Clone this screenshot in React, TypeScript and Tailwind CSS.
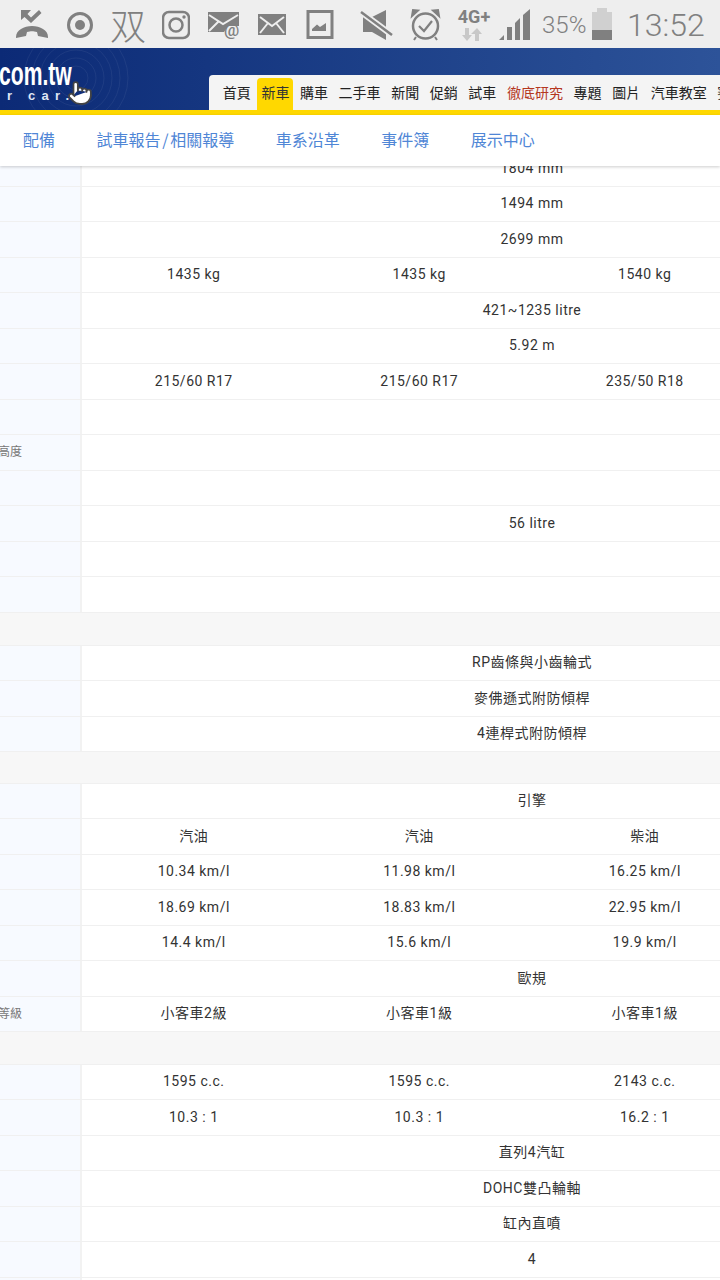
import React from "react";
import { Pointer } from "lucide-react";

const c = "#808080";

function Ico({ x, w, className, children }: { x: number; w: number; className: string; children: React.ReactNode }) {
  return (
    <svg width={w} height={48} viewBox={`${x} 0 ${w} 48`} className={`shrink-0 ${className}`}>
      {children}
    </svg>
  );
}

function StatusBar() {
  return (
    <div className="flex h-12 items-center overflow-hidden bg-[#eeeeee] font-['Roboto',sans-serif] text-[#808080]">
      <Ico x={16} w={32} className="ml-[16px]">
        <path d="M21 10 H31 L27.500 14 L31 17.500 L39 10 L41.500 13 L31 23 L24.500 17 L21 20 Z" fill={c} />
        <path d="M16 37 C16 30 24 26 32 26 C40 26 48 30 48 37 V38 L38 36 L37 32 C33 31 31 31 27 32 L26 36 L16 38 Z" fill={c} />
      </Ico>
      <Ico x={67} w={26} className="ml-[19px]">
        <circle cx="80" cy="25" r="11.500" fill="none" stroke={c} strokeWidth="3" />
        <circle cx="80" cy="25" r="5" fill={c} />
      </Ico>
      <span className="ml-[17px] w-[35px] shrink-0 text-center font-['Noto_Sans_CJK_SC',sans-serif] text-[36px] leading-[48px] font-light">双</span>
      <Ico x={162} w={28} className="ml-[17px]">
        <rect x="163" y="12" width="26" height="26" rx="6" fill="none" stroke={c} strokeWidth="2.500" />
        <circle cx="176" cy="25" r="6.500" fill="none" stroke={c} strokeWidth="2.500" />
        <circle cx="184" cy="17" r="1.700" fill={c} />
      </Ico>
      <div className="relative ml-[18px] h-12 w-[33px] shrink-0">
        <Ico x={208} w={33} className="">
          <path d="M208 12 H239 V26 H228 L224 32 H208 Z" fill={c} />
          <path d="M209 15 L223 24 L238 15 M209 31 L219 21" fill="none" stroke="#eee" strokeWidth="2" />
        </Ico>
        <span className="absolute left-[16px] top-[20px] text-[17px] leading-[20px] font-medium">@</span>
      </div>
      <Ico x={258} w={28} className="ml-[17px]">
        <rect x="258" y="14" width="28" height="21" fill={c} />
        <path d="M260 17 L272 26 L284 17 M260 33 L268 23 M284 33 L276 23" fill="none" stroke="#eee" strokeWidth="2" />
      </Ico>
      <Ico x={306} w={28} className="ml-[20px]">
        <rect x="308" y="11.500" width="24" height="26" fill="none" stroke={c} strokeWidth="3" />
        <path d="M312 31 V29 L317 24.500 L320 27 L326 23 V31 Z" fill={c} />
      </Ico>
      <Ico x={360} w={34} className="ml-[26px]">
        <path d="M363 17 H372 L386 10 V40 L372 32 H363 Z" fill={c} />
        <path d="M361 12 L392 35" stroke="#eee" strokeWidth="6" />
        <path d="M361 12 L392 35" stroke={c} strokeWidth="2.500" />
      </Ico>
      <Ico x={410} w={32} className="ml-[16px]">
        <circle cx="425.500" cy="26" r="12.500" fill="none" stroke={c} strokeWidth="2.500" />
        <path d="M419 26 L424 31 L432 21" fill="none" stroke={c} strokeWidth="2.200" />
        <path d="M412 16 L418 10.500 L413 10 Z M439 16 L433 10.500 L438 10 Z" fill={c} stroke={c} strokeWidth="2" />
        <path d="M416 37 L414 40 M435 37 L437 40" stroke={c} strokeWidth="2" />
      </Ico>
      <div className="ml-[15px] flex h-12 w-[34px] shrink-0 flex-col items-center pt-[6px]">
        <span className="text-[18px] leading-[21px] font-bold">4G+</span>
        <svg width="20" height="14" viewBox="467 28 20 14" className="mr-[5px] mt-[1px]">
          <path d="M470 28 H474 V35 H477 L472 41 L467 35 H470 Z" fill="#c8c8c8" />
          <path d="M480 41 H484 V34 H487 L482 28 L476 34 H480 Z" fill="#c8c8c8" />
        </svg>
      </div>
      <Ico x={500} w={31} className="ml-[8px]">
        <path d="M500 40 L505 35 V40 Z" fill={c} />
        <rect x="508" y="27" width="5" height="13" fill={c} />
        <path d="M516 40 V23 L521 18 V40 Z" fill={c} />
        <path d="M524 40 V15 L531 9 V40 Z" fill={c} />
      </Ico>
      <span className="ml-[12px] w-[45px] shrink-0 pt-[2px] text-[24px] leading-[46px] font-light">35%</span>
      <Ico x={593} w={21} className="ml-[5px]">
        <rect x="593" y="12" width="20" height="28" fill="#d0d0d0" />
        <rect x="598" y="8" width="10" height="4" fill="#d0d0d0" />
        <rect x="593" y="30" width="20" height="10" fill={c} />
      </Ico>
      <span className="ml-[14px] shrink-0 pt-[2px] text-[32px] leading-[46px] font-light">13:52</span>
    </div>
  );
}

function Logo() {
  return (
    <div className="relative h-[62px] w-[209px] shrink-0 overflow-hidden">
      <svg width="209" height="62" viewBox="0 0 209 62" className="absolute left-0 top-0">
        {[12, 20, 28, 36, 44, 52].map((r) => (
          <circle key={r} cx="76" cy="30" r={r} fill="none" stroke="#fff" strokeOpacity="0.06" />
        ))}
      </svg>
      <div className="absolute left-[-1px] top-[14px] origin-left scale-x-[0.64] font-['Liberation_Sans',sans-serif] text-[33px] leading-[24px] font-bold text-white">com.tw</div>
      <div className="absolute left-[7px] top-[41px] font-['Liberation_Sans',sans-serif] text-[13px] leading-[14px] font-bold tracking-[6.2px] text-[#dfe6f5]">r car.</div>
      <Pointer className="absolute left-[67px] top-[32px]" size={26} fill="#fff" stroke="#444" strokeWidth={1.6} />
    </div>
  );
}

function TopBanner() {
  const items = ["首頁", "新車", "購車", "二手車", "新聞", "促銷", "試車", "徹底研究", "專題", "圖片", "汽車教室", "賽車"];
  return (
    <div className="flex h-[62px] items-end bg-gradient-to-r from-[#0c2a76] to-[#2d5399]">
      <Logo />
      <div className="flex h-[35px] w-[511px] shrink-0 items-end overflow-hidden rounded-tl bg-[#f4f4f4] pl-[8.5px] font-['Noto_Sans_CJK_TC',sans-serif]">
        {items.map((t) => (
          <div
            key={t}
            className={`mx-[1.3px] flex h-[32px] shrink-0 items-center justify-center whitespace-nowrap rounded-t px-[4px] pb-[4px] text-[14px] ${
              t === "新車" ? "bg-[#ffd800] text-[#333]" : t === "徹底研究" ? "text-[#b5371f]" : "text-[#222]"
            }`}
          >
            {t}
          </div>
        ))}
      </div>
    </div>
  );
}

function Tabs() {
  return (
    <div className="flex h-[51px] items-center gap-[41.5px] bg-white pb-[3px] pl-[23px] font-['Noto_Sans_CJK_TC',sans-serif] text-[16px] text-[#4f86d6] shadow-[0_1px_3px_rgba(0,0,0,0.2)]">
      <span className="whitespace-nowrap">配備</span>
      <span className="whitespace-nowrap">試車報告<span className="mx-[1.75px]">/</span>相關報導</span>
      <span className="whitespace-nowrap">車系沿革</span>
      <span className="whitespace-nowrap">事件簿</span>
      <span className="whitespace-nowrap">展示中心</span>
    </div>
  );
}

type Row = { label?: string; all?: string; cols?: [string, string, string] };

function SpecRow({ label, all, cols }: Row) {
  return (
    <div className="flex h-[35.5px] border-b border-[#f0f0f0] bg-white">
      <div className="z-[1] flex w-[82px] shrink-0 items-center border-r-2 border-[#f2f2f2] bg-[#f7faff] text-[12px] text-[#777]">
        {label && <span className="-ml-[2px] tracking-[-0.1px]">{label}</span>}
      </div>
      {all ? (
        <div className="-ml-[1px] flex w-[902px] shrink-0 items-center justify-center text-[14px] tracking-[0.5px] text-[#333]">{all}</div>
      ) : (
        <div className="-ml-[1px] grid w-[902px] shrink-0 grid-cols-4 items-center text-center text-[14px] tracking-[0.5px] text-[#333]">
          {cols?.map((v, i) => <span key={i}>{v}</span>)}
        </div>
      )}
    </div>
  );
}

function Section({ h }: { h: string }) {
  return <div className={`${h} border-b border-[#f0f0f0] bg-[#f7f7f7]`} />;
}

const group1: Row[] = [
  { all: "1804 mm" },
  { all: "1494 mm" },
  { all: "2699 mm" },
  { cols: ["1435 kg", "1435 kg", "1540 kg"] },
  { all: "421~1235 litre" },
  { all: "5.92 m" },
  { cols: ["215/60 R17", "215/60 R17", "235/50 R18"] },
  {},
  { label: "高度" },
  {},
  { all: "56 litre" },
  {},
  {},
];
const group2: Row[] = [{ all: "RP齒條與小齒輪式" }, { all: "麥佛遜式附防傾桿" }, { all: "4連桿式附防傾桿" }];
const group3: Row[] = [
  { all: "引擎" },
  { cols: ["汽油", "汽油", "柴油"] },
  { cols: ["10.34 km/l", "11.98 km/l", "16.25 km/l"] },
  { cols: ["18.69 km/l", "18.83 km/l", "22.95 km/l"] },
  { cols: ["14.4 km/l", "15.6 km/l", "19.9 km/l"] },
  { all: "歐規" },
  { label: "等級", cols: ["小客車2級", "小客車1級", "小客車1級"] },
];
const group4: Row[] = [
  { cols: ["1595 c.c.", "1595 c.c.", "2143 c.c."] },
  { cols: ["10.3 : 1", "10.3 : 1", "16.2 : 1"] },
  { all: "直列4汽缸" },
  { all: "DOHC雙凸輪軸" },
  { all: "缸內直噴" },
  { all: "4" },
  {},
];

export default function App() {
  const mapRows = (rows: Row[]) => rows.map((r, i) => <SpecRow key={i} {...r} />);
  return (
    <div className="relative h-[1280px] w-[720px] overflow-hidden bg-white font-['Roboto','Noto_Sans_CJK_TC',sans-serif]">
      <div className="relative z-10">
        <StatusBar />
        <TopBanner />
        <div className="h-[5px] bg-[#ffd800]" />
        <Tabs />
      </div>
      <div className="-mt-[15px]">
        {mapRows(group1)}
        <Section h="h-[33px]" />
        {mapRows(group2)}
        <Section h="h-[31.5px]" />
        {mapRows(group3)}
        <Section h="h-[32.5px]" />
        {mapRows(group4)}
      </div>
    </div>
  );
}
